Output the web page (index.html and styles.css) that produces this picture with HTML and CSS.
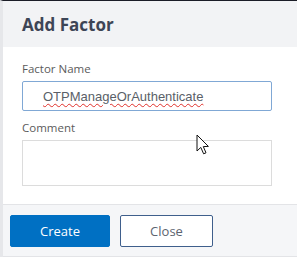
FILE: index.html
```html
<!DOCTYPE html>
<html>
<head>
<meta charset="utf-8">
<link rel="stylesheet" href="styles.css">
</head>
<body>
<div class="dialog">
  <div class="header"><h1 class="title">Add Factor</h1></div>
  <div class="body">
    <label class="label">Factor Name</label>
    <div class="input"><span class="misspelled">OTPManageOrAuthenticate</span></div>
    <label class="label label-comment">Comment</label>
    <div class="textarea"></div>
  </div>
  <div class="footer">
    <button class="btn btn-primary">Create</button>
    <button class="btn btn-secondary">Close</button>
  </div>
  <svg class="cursor" width="14" height="22" viewBox="0 0 14 22">
    <path d="M1 1 L1 17 L4.8 13.4 L7.6 19.8 L10 18.8 L7.3 12.6 L12.4 12.4 Z" fill="#fff" stroke="#111" stroke-width="1" stroke-linejoin="round"/>
  </svg>
</div>
</body>
</html>
```
FILE: styles.css
```css
html, body {
  margin: 0;
  padding: 0;
  background: #fff;
}
body {
  width: 297px;
  height: 257px;
  overflow: hidden;
  font-family: "Open Sans", "Liberation Sans", sans-serif;
}
.dialog {
  position: relative;
  width: 297px;
  height: 257px;
  box-sizing: border-box;
  border-top: 1px solid #1b1d27;
  border-left: 3px solid #e6e7ea;
  display: flex;
  flex-direction: column;
}
.header {
  height: 46px;
  background: #f2f3f5;
  display: flex;
  align-items: center;
  padding-left: 19px;
}
.title {
  margin: 0;
  font-size: 17px;
  font-weight: 700;
  color: #3d4556;
}
.body {
  background: #fff;
  flex: 1;
  padding: 14px 0 0 19px;
  display: flex;
  flex-direction: column;
}
.label {
  font-size: 11.5px;
  color: #5b5b5b;
  line-height: 16px;
}
.input {
  margin-top: 4px;
  height: 28px;
  width: 228px;
  border: 1px solid #80a8d5;
  border-radius: 2px;
  display: flex;
  align-items: center;
  padding-left: 20px;
  font-family: "Liberation Sans", Arial, sans-serif;
  font-size: 13px;
  color: #5a5f68;
}
.misspelled {
  text-decoration: underline wavy #e0302a;
  text-decoration-thickness: 1px;
  text-underline-offset: 2px;
}
.label-comment {
  margin-top: 9px;
}
.textarea {
  margin-top: 4px;
  width: 248px;
  height: 44px;
  border: 1px solid #dcdcdc;
}
.footer {
  height: 51px;
  background: #f5f6f8;
  border-top: 1px solid #e3e4e7;
  border-bottom: 1px solid #e3e4e7;
  display: flex;
  align-items: center;
  gap: 10px;
  padding-left: 7px;
}
.btn {
  height: 32px;
  font-family: "Open Sans", "Liberation Sans", sans-serif;
  font-size: 13px;
  border-radius: 2px;
  padding: 0;
}
.btn-primary {
  width: 100px;
  background: #0070c3;
  border: 1px solid #0070c3;
  color: #fff;
}
.btn-secondary {
  width: 93px;
  background: #fff;
  border: 1px solid #3f5f8c;
  color: #5c6470;
}
.cursor {
  position: absolute;
  left: 193px;
  top: 133px;
}
```
